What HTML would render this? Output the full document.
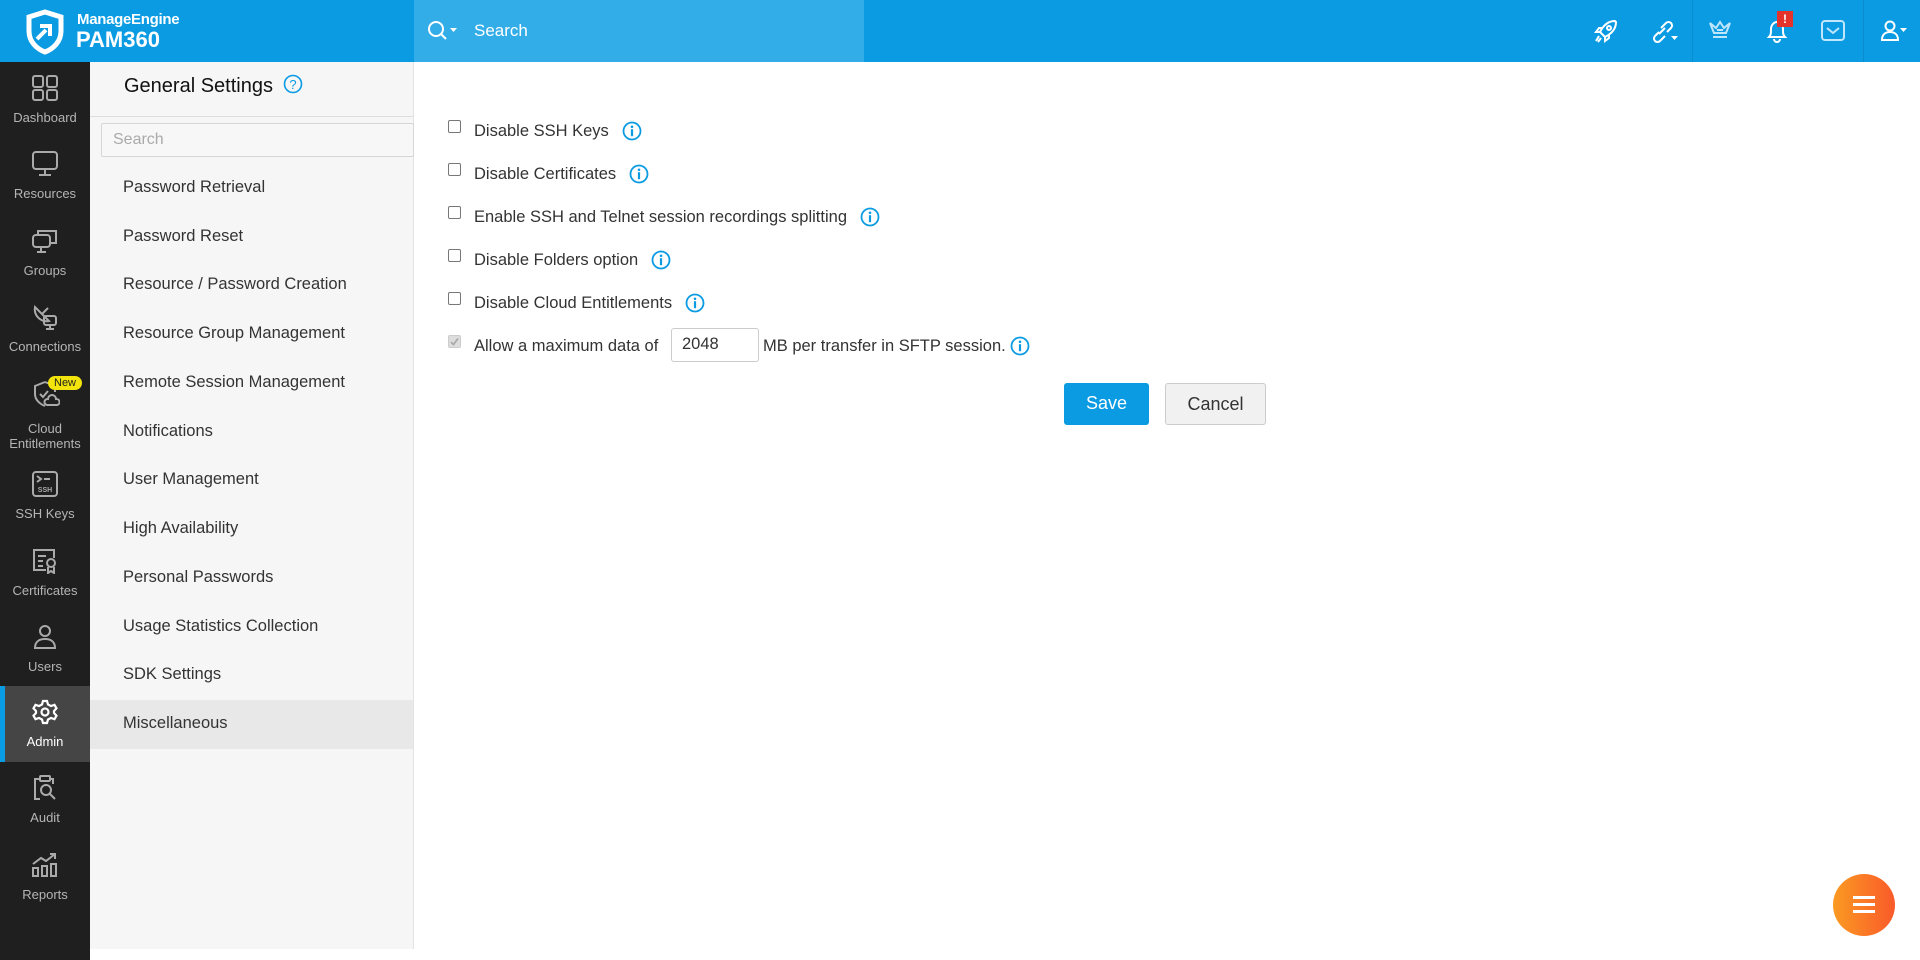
<!DOCTYPE html>
<html><head><meta charset="utf-8"><style>
*{box-sizing:border-box;margin:0;padding:0}
body{width:1920px;height:960px;overflow:hidden;background:#fff;font-family:"Liberation Sans",sans-serif;position:relative}
.hdr{position:absolute;left:0;top:0;width:1920px;height:62px;background:#0a9be3}
.srch{position:absolute;left:414px;top:0;width:450px;height:62px;background:#33ade8}
.srch span{position:absolute;left:60px;top:21px;color:#fff;font-size:17px}
.side{position:absolute;left:0;top:62px;width:90px;height:898px;background:#1f1f1f}
.si{position:absolute;left:0;width:90px;height:76px;color:#b5b5b5;font-size:13px;text-align:center}
.si svg{position:absolute;left:32px;top:13px}
.si .l{position:absolute;left:0;right:0;top:48px;line-height:15px}
.si.act{background:#454545;color:#fff}
.si.act:before{content:"";position:absolute;left:0;top:0;width:5px;height:76px;background:#0a9be3}
.panel{position:absolute;left:90px;top:62px;width:324px;height:887px;background:#f6f6f6;border-right:1px solid #e3e3e3}
.ttl{position:absolute;left:34px;top:12px;font-size:20px;color:#111}
.div{position:absolute;left:0;top:54px;width:323px;height:1px;background:#ddd}
.ps{position:absolute;left:11px;top:61px;width:313px;height:34px;border:1px solid #d6d6d6;background:#f7f7f7;border-radius:2px;color:#aaa;font-size:16px;padding:7px 0 0 11px}
.ni{position:absolute;left:0;width:323px;height:49px;font-size:16.5px;color:#333;padding:14px 0 0 33px}
.ni.act{background:#e8e8e8}
.row{position:absolute;left:448px;font-size:16.5px;color:#333;height:20px}
.cb{position:absolute;left:0;top:0;width:13px;height:13px;border:1px solid #777;border-radius:2px;background:#fff}
.row .t{position:absolute;left:26px;top:1px;white-space:nowrap;line-height:20px;height:20px}
.info{display:inline-block;vertical-align:top;margin-left:13px}
.btn{position:absolute;top:383px;height:42px;border-radius:3px;font-size:18px;text-align:center;line-height:41px}
</style></head><body>
<div class="hdr">
 <svg style="position:absolute;left:24px;top:9px" width="42" height="46" viewBox="0 0 42 46"><path d="M21 3 L37 8 V22 C37 33 29 40 21 43 C13 40 5 33 5 22 V8 Z" fill="none" stroke="#fff" stroke-width="5"/><path d="M13 30 L22 21 M16 17 H26 V27" fill="none" stroke="#fff" stroke-width="4"/></svg>
 <div style="position:absolute;left:77px;top:11px;color:#fff;font-weight:bold;font-size:15px;letter-spacing:-0.3px">ManageEngine</div>
 <div style="position:absolute;left:76px;top:27px;color:#fff;font-weight:bold;font-size:22px">PAM360</div>
 <div class="srch"><svg style="position:absolute;left:12px;top:19px" width="32" height="24"><circle cx="10" cy="10" r="7" fill="none" stroke="#fff" stroke-width="2"/><path d="M15 15 L20 20" stroke="#fff" stroke-width="2"/><path d="M24 9 H31 L27.5 13Z" fill="#fff"/></svg><span>Search</span></div>
 <svg style="position:absolute;left:1593px;top:18px" width="26" height="26" viewBox="0 0 26 26" fill="none" stroke="#fff" stroke-width="2"><path d="M22 3 C15 3 10 8 7 14 L12 19 C18 16 23 11 23 4Z"/><circle cx="16" cy="10" r="2"/><path d="M7 14 L3 14 L6 10 H10 M12 19 V23 L16 20 V16 M6 18 L3 23 M8 20 L5 24"/></svg>
 <svg style="position:absolute;left:1649px;top:18px" width="30" height="26" viewBox="0 0 30 26" fill="none" stroke="#fff" stroke-width="2"><path d="M10 14 L6 18 A3.5 3.5 0 0 0 11 23 L16 18 M12 10 L17 5 A3.5 3.5 0 0 1 22 10 L18 14 M10 16 L16 10"/><path d="M22 18 H29 L25.5 22Z" fill="#fff" stroke="none"/></svg>
 <div style="position:absolute;left:1692px;top:0;width:1px;height:62px;background:#0a8ccd"></div>
 <svg style="position:absolute;left:1707px;top:19px" width="26" height="24" viewBox="0 0 26 24" fill="none" stroke="#bfe6fa" stroke-width="2"><path d="M3 4 L7 14 H19 L23 4 L17 9 L13 3 L9 9Z M6 18 H20 M10 11 H16"/></svg>
 <svg style="position:absolute;left:1764px;top:16px" width="26" height="28" viewBox="0 0 26 28" fill="none" stroke="#fff" stroke-width="2"><path d="M5 21 C7 19 7 17 7 13 C7 9 10 6 13 6 C16 6 19 9 19 13 C19 17 19 19 21 21Z M10 23 A3 3 0 0 0 16 23"/></svg>
 <div style="position:absolute;left:1777px;top:11px;width:16px;height:16px;background:#e5322b;color:#fff;font-size:12px;font-weight:bold;text-align:center;line-height:16px">!</div>
 <svg style="position:absolute;left:1820px;top:19px" width="26" height="24" viewBox="0 0 26 24" fill="none" stroke="#bfe6fa" stroke-width="2"><rect x="2" y="2" width="22" height="19" rx="3"/><path d="M7 9 L13 14 L19 9"/></svg>
 <div style="position:absolute;left:1863px;top:0;width:1px;height:62px;background:#0a8ccd"></div>
 <svg style="position:absolute;left:1879px;top:19px" width="30" height="26" viewBox="0 0 30 26" fill="none" stroke="#fff" stroke-width="2"><circle cx="11" cy="7" r="4.5"/><path d="M3 21 C3 15 7 13 11 13 C15 13 19 15 19 21 Z"/><path d="M21 9 H28 L24.5 13Z" fill="#fff" stroke="none"/></svg>
</div>

<div class="side">
 <div class="si" style="top:0"><svg width="26" height="26" viewBox="0 0 26 26" fill="none" stroke="#aaa" stroke-width="2"><rect x="1" y="1" width="10" height="11" rx="2"/><rect x="15" y="1" width="10" height="11" rx="2"/><rect x="1" y="15" width="10" height="10" rx="2"/><rect x="15" y="15" width="10" height="10" rx="2"/></svg><div class="l">Dashboard</div></div>
 <div class="si" style="top:76px"><svg width="26" height="26" viewBox="0 0 26 26" fill="none" stroke="#aaa" stroke-width="2"><rect x="1" y="1" width="24" height="17" rx="3"/><path d="M13 18 V23 M7 24 H19"/></svg><div class="l">Resources</div></div>
 <div class="si" style="top:153px"><svg width="26" height="26" viewBox="0 0 26 26" fill="none" stroke="#aaa" stroke-width="2"><rect x="1" y="7" width="17" height="12" rx="3"/><path d="M6 7 V3 H24 V15 H18 M9 19 V23 M5 24 H14"/></svg><div class="l">Groups</div></div>
 <div class="si" style="top:229px"><svg width="26" height="26" viewBox="0 0 26 26" fill="none" stroke="#aaa" stroke-width="2"><path d="M3 3 A12 12 0 0 0 17 17 Z M10 10 L16 4"/><rect x="12" y="12" width="12" height="9" rx="2"/><path d="M18 21 V24 M14 25 H22"/></svg><div class="l">Connections</div></div>
 <div class="si" style="top:305px;height:90px"><svg width="28" height="28" viewBox="0 0 28 28" fill="none" stroke="#aaa" stroke-width="2"><path d="M13 2 L23 6 V12 M13 2 L3 6 V14 C3 20 8 24 13 26"/><path d="M8 14 L11 17 L16 11"/><path d="M15 25 A3 3 0 0 1 16 19 A4 4 0 0 1 24 19 A3 3 0 0 1 25 25Z"/></svg><div style="position:absolute;left:48px;top:9px;background:#f3e40b;color:#222;font-size:11px;border-radius:9px;padding:1px 6px">New</div><div class="l" style="top:54px">Cloud<br>Entitlements</div></div>
 <div class="si" style="top:396px"><svg width="26" height="26" viewBox="0 0 26 26" fill="none" stroke="#aaa" stroke-width="2"><rect x="1" y="1" width="24" height="24" rx="3"/><path d="M5 5 L9 8 L5 11 M12 8 H18"/><text x="13" y="21" font-size="7" font-weight="bold" fill="#aaa" stroke="none" text-anchor="middle" font-family="Liberation Sans">SSH</text></svg><div class="l">SSH Keys</div></div>
 <div class="si" style="top:473px"><svg width="26" height="26" viewBox="0 0 26 26" fill="none" stroke="#aaa" stroke-width="2"><path d="M14 22 H2 V2 H22 V10"/><path d="M6 8 H14 M6 13 H11 M6 18 H11"/><circle cx="19" cy="15" r="4"/><path d="M16 19 V25 L19 23 L22 25 V19"/></svg><div class="l">Certificates</div></div>
 <div class="si" style="top:549px"><svg width="26" height="26" viewBox="0 0 26 26" fill="none" stroke="#aaa" stroke-width="2"><circle cx="13" cy="7" r="5"/><path d="M3 24 C3 17 8 15 13 15 C18 15 23 17 23 24 Z"/></svg><div class="l">Users</div></div>
 <div class="si act" style="top:624px"><svg width="26" height="26" viewBox="0 0 26 26" fill="none" stroke="#fff" stroke-width="2.2"><path d="M11 2 H15 L16 5.5 L19 7 L22.5 5.8 L24.5 9.3 L22 12 V14 L24.5 16.7 L22.5 20.2 L19 19 L16 20.5 L15 24 H11 L10 20.5 L7 19 L3.5 20.2 L1.5 16.7 L4 14 V12 L1.5 9.3 L3.5 5.8 L7 7 L10 5.5Z"/><circle cx="13" cy="13" r="3.5"/></svg><div class="l">Admin</div></div>
 <div class="si" style="top:700px"><svg width="26" height="26" viewBox="0 0 26 26" fill="none" stroke="#aaa" stroke-width="2"><path d="M8 4 H3 V24 H8 M18 4 H21 V9"/><rect x="8" y="1" width="10" height="5" rx="1"/><circle cx="14" cy="15" r="5"/><path d="M18 19 L23 24"/></svg><div class="l">Audit</div></div>
 <div class="si" style="top:777px"><svg width="26" height="26" viewBox="0 0 26 26" fill="none" stroke="#aaa" stroke-width="2"><rect x="1" y="16" width="5" height="8"/><rect x="10" y="14" width="5" height="10"/><rect x="19" y="12" width="5" height="12"/><path d="M1 12 L9 6 L14 9 L23 2 M18 2 H23 V7"/></svg><div class="l">Reports</div></div>
</div>

<div class="panel">
 <div class="ttl">General Settings <svg style="vertical-align:-2px;margin-left:4px" width="20" height="20" viewBox="0 0 20 20"><circle cx="10" cy="10" r="8.5" fill="none" stroke="#0a9be3" stroke-width="1.6"/><text x="10" y="15" font-size="13" fill="#0a9be3" text-anchor="middle" font-family="Liberation Sans">?</text></svg></div>
 <div class="div"></div>
 <div class="ps">Search</div>
 <div class="ni" style="top:102px">Password Retrieval</div>
 <div class="ni" style="top:151px">Password Reset</div>
 <div class="ni" style="top:199px">Resource / Password Creation</div>
 <div class="ni" style="top:248px">Resource Group Management</div>
 <div class="ni" style="top:297px">Remote Session Management</div>
 <div class="ni" style="top:346px">Notifications</div>
 <div class="ni" style="top:394px">User Management</div>
 <div class="ni" style="top:443px">High Availability</div>
 <div class="ni" style="top:492px">Personal Passwords</div>
 <div class="ni" style="top:541px">Usage Statistics Collection</div>
 <div class="ni" style="top:589px">SDK Settings</div>
 <div class="ni act" style="top:638px">Miscellaneous</div>
</div>

<svg width="0" height="0" style="position:absolute"><defs><g id="inf"><circle cx="10" cy="10" r="8.5" fill="none" stroke="#0a9be3" stroke-width="1.8"/><circle cx="10" cy="5.8" r="1.3" fill="#0a9be3"/><rect x="8.9" y="8.2" width="2.2" height="7" fill="#0a9be3"/></g></defs></svg>

<div class="row" style="top:120px"><div class="cb"></div><div class="t">Disable SSH Keys<svg class="info" width="20" height="20"><use href="#inf"/></svg></div></div>
<div class="row" style="top:163px"><div class="cb"></div><div class="t">Disable Certificates<svg class="info" width="20" height="20"><use href="#inf"/></svg></div></div>
<div class="row" style="top:206px"><div class="cb"></div><div class="t">Enable SSH and Telnet session recordings splitting<svg class="info" width="20" height="20"><use href="#inf"/></svg></div></div>
<div class="row" style="top:249px"><div class="cb"></div><div class="t">Disable Folders option<svg class="info" width="20" height="20"><use href="#inf"/></svg></div></div>
<div class="row" style="top:292px"><div class="cb"></div><div class="t">Disable Cloud Entitlements<svg class="info" width="20" height="20"><use href="#inf"/></svg></div></div>
<div class="row" style="top:335px"><div class="cb" style="background:#ddd;border-color:#ccc"><svg width="11" height="11" style="position:absolute;left:0;top:0"><path d="M2 6 L4.5 8.5 L9 2.5" fill="none" stroke="#aaa" stroke-width="1.8"/></svg></div>
 <div class="t">Allow a maximum data of</div>
 <div style="position:absolute;left:223px;top:-7px;width:88px;height:34px;border:1px solid #ccc;border-radius:3px;padding:6px 0 0 10px">2048</div>
 <div class="t" style="left:315px">MB per transfer in SFTP session.<svg class="info" style="margin-left:4px" width="20" height="20"><use href="#inf"/></svg></div>
</div>

<div class="btn" style="left:1064px;width:85px;background:#0a9be3;color:#fff">Save</div>
<div class="btn" style="left:1165px;width:101px;background:#f1f1f1;border:1px solid #ccc;color:#333">Cancel</div>

<div style="position:absolute;left:1833px;top:874px;width:62px;height:62px;border-radius:50%;background:linear-gradient(90deg,#fb9a22,#f95a2a)"><div style="position:absolute;left:20px;top:22px;width:22px;height:2.5px;background:#fff;box-shadow:0 7px 0 #fff,0 14px 0 #fff"></div></div>
</body></html>
